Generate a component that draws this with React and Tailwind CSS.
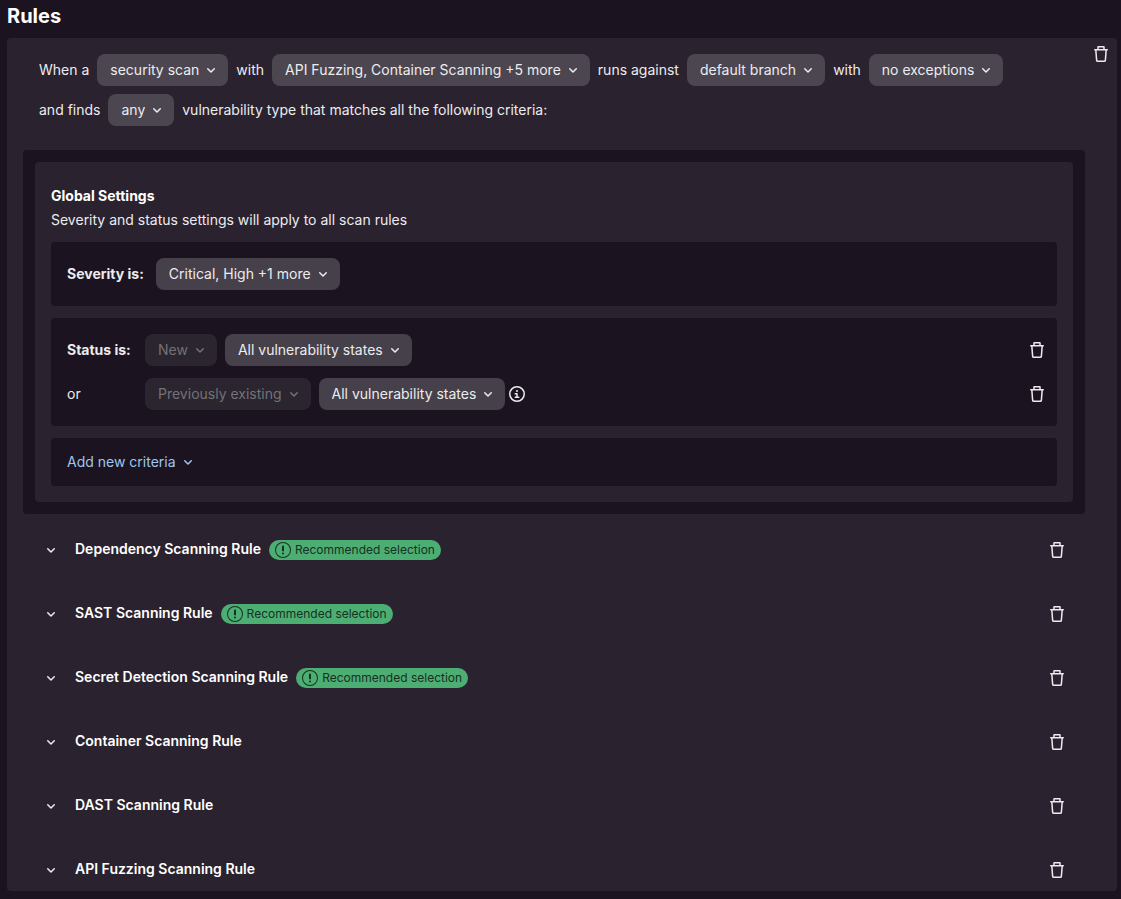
import { useState } from "react";

const scanRules = [
  { name: "Dependency Scanning Rule", recommended: true },
  { name: "SAST Scanning Rule", recommended: true },
  { name: "Secret Detection Scanning Rule", recommended: true },
  { name: "Container Scanning Rule" },
  { name: "DAST Scanning Rule" },
  { name: "API Fuzzing Scanning Rule" },
];

function ChevronDown({ className = "" }) {
  return (
    <svg viewBox="0 0 16 16" fill="currentColor" aria-hidden="true" className={`size-4 shrink-0 ${className}`}>
      <path
        fillRule="evenodd"
        d="M4.22 6.22a.75.75 0 0 1 1.06 0L8 8.94l2.72-2.72a.75.75 0 1 1 1.06 1.06l-3.25 3.25a.75.75 0 0 1-1.06 0L4.22 7.28a.75.75 0 0 1 0-1.06z"
      />
    </svg>
  );
}

function InfoIcon() {
  return (
    <svg viewBox="0 0 16 16" fill="currentColor" aria-hidden="true" className="size-4">
      <path
        fillRule="evenodd"
        d="M8 14.5a6.5 6.5 0 1 0 0-13 6.5 6.5 0 0 0 0 13zM8 16A8 8 0 1 0 8 0a8 8 0 0 0 0 16zM7 5a1 1 0 1 1 2 0 1 1 0 0 1-2 0zm-.75 2a.75.75 0 0 0 0 1.5h1v2h-1a.75.75 0 0 0 0 1.5h3.5a.75.75 0 0 0 0-1.5h-1V7.75A.75.75 0 0 0 8 7H6.25z"
      />
    </svg>
  );
}

function WarningIcon() {
  return (
    <svg viewBox="0 0 16 16" fill="currentColor" aria-hidden="true" className="size-4 shrink-0">
      <path
        fillRule="evenodd"
        d="M8 15a7 7 0 1 0 0-14 7 7 0 0 0 0 14zm0 1A8 8 0 1 0 8 0a8 8 0 0 0 0 16zM7 4.5a1 1 0 0 1 2 0v4a1 1 0 0 1-2 0v-4zM9 11.5a1 1 0 1 1-2 0 1 1 0 0 1 2 0z"
      />
    </svg>
  );
}

function RemoveButton({ label }) {
  return (
    <button
      type="button"
      aria-label={label}
      className="flex size-8 shrink-0 items-center justify-center rounded-lg text-[#ececef] hover:bg-white/10"
    >
      <svg viewBox="0 0 16 16" fill="currentColor" aria-hidden="true" className="size-4">
        <path
          fillRule="evenodd"
          d="M5.75 3V1.5h4.5V3h-4.5zm-1.5 0V1a1 1 0 0 1 1-1h5.5a1 1 0 0 1 1 1v2h2.5a.75.75 0 0 1 0 1.5h-.365l-.743 9.653A2 2 0 0 1 11.148 16H4.852a2 2 0 0 1-1.994-1.847L2.115 4.5H1.75a.75.75 0 0 1 0-1.5h2.5zm-.63 1.5.734 9.538a.5.5 0 0 0 .498.462h6.296a.5.5 0 0 0 .498-.462L12.38 4.5H3.62z"
        />
      </svg>
    </button>
  );
}

function Dropdown({ label, value, disabled = false, dark = false }) {
  let colors = "bg-[#4c4650] text-[#ececef]";
  if (dark) colors = "bg-[#454049] text-[#ececef]";
  if (disabled) colors = "bg-[#2a252e] text-[#737278]";

  return (
    <span className="relative inline-flex">
      <select
        aria-label={label}
        defaultValue={value}
        disabled={disabled}
        className={`field-sizing-content h-8 appearance-none rounded-lg pr-[29px] pl-[13px] opacity-100 ${colors}`}
      >
        <option>{value}</option>
      </select>
      <ChevronDown
        className={`pointer-events-none absolute top-2 right-[9px] ${disabled ? "text-[#737278]" : "text-[#ececef]"}`}
      />
    </span>
  );
}

function GlobalSettings() {
  return (
    <section className="rounded bg-[#1b131f] p-3">
      <div className="rounded bg-[#2a222e] px-4 pt-6 pb-4">
        <h3 className="font-bold text-white">Global Settings</h3>
        <p className="mt-1">Severity and status settings will apply to all scan rules</p>

        <div className="mt-3 flex flex-col gap-3">
          <div className="flex items-center gap-3 rounded bg-[#1b131f] p-4">
            <span className="font-bold">Severity is:</span>
            <Dropdown dark label="Severity" value="Critical, High +1 more" />
          </div>

          <div className="flex flex-col gap-3 rounded bg-[#1b131f] py-4 pr-1 pl-4">
            <div className="flex items-center gap-2">
              <span className="w-[70px] font-bold">Status is:</span>
              <Dropdown disabled label="Status group" value="New" />
              <Dropdown dark label="New vulnerability states" value="All vulnerability states" />
              <div className="ml-auto">
                <RemoveButton label="Remove new status" />
              </div>
            </div>
            <div className="flex items-center gap-2">
              <span className="w-[70px]">or</span>
              <Dropdown disabled label="Status group" value="Previously existing" />
              <div className="flex items-center gap-1">
                <Dropdown dark label="Existing vulnerability states" value="All vulnerability states" />
                <button type="button" aria-label="More information">
                  <InfoIcon />
                </button>
              </div>
              <div className="ml-auto">
                <RemoveButton label="Remove previously existing status" />
              </div>
            </div>
          </div>

          <div className="flex h-12 items-center rounded bg-[#1b131f] px-4">
            <button type="button" aria-haspopup="menu" className="flex items-center gap-1 text-[#9dc7f1]">
              Add new criteria
              <ChevronDown />
            </button>
          </div>
        </div>
      </div>
    </section>
  );
}

function ScanRule({ rule }) {
  const [open, setOpen] = useState(false);

  return (
    <li className="flex items-center pr-3 pl-4">
      <button
        type="button"
        aria-label={`Toggle ${rule.name}`}
        aria-expanded={open}
        onClick={() => setOpen(!open)}
        className="mr-3 flex size-6 items-center justify-center rounded text-[#ececef]"
      >
        <ChevronDown className={open ? "rotate-180" : ""} />
      </button>
      <h3 className="pb-[2px] font-semibold text-white">{rule.name}</h3>
      {rule.recommended && (
        <span className="ml-2 flex h-5 items-center gap-1 rounded-full bg-[#4cae73] px-[6px] text-xs text-[#18301f]">
          <WarningIcon />
          Recommended selection
        </span>
      )}
      <div className="ml-auto">
        <RemoveButton label={`Remove ${rule.name}`} />
      </div>
    </li>
  );
}

export default function App() {
  return (
    <main className="min-h-screen bg-[#1b131f] pt-1 pr-1 pb-2 pl-[7px] font-['Inter','Liberation_Sans',sans-serif] text-sm text-[#ececef]">
      <h2 className="text-xl leading-6 font-bold text-white">Rules</h2>

      <div className="mt-[10px] flex items-start rounded bg-[#2a222e]">
        <div className="min-w-0 flex-1 pt-4 pb-[5px] pl-4">
          <div className="mb-6 flex flex-wrap items-center gap-2 px-4">
            <span>When a</span>
            <Dropdown label="Scan type" value="security scan" />
            <span>with</span>
            <Dropdown label="Scanners" value="API Fuzzing, Container Scanning +5 more" />
            <span>runs against</span>
            <Dropdown label="Branches" value="default branch" />
            <span>with</span>
            <Dropdown label="Branch exceptions" value="no exceptions" />
            <span>and finds</span>
            <Dropdown label="Vulnerabilities allowed" value="any" />
            <span>vulnerability type that matches all the following criteria:</span>
          </div>

          <GlobalSettings />

          <ul className="mt-5 flex flex-col gap-8">
            {scanRules.map((rule) => (
              <ScanRule key={rule.name} rule={rule} />
            ))}
          </ul>
        </div>
        <RemoveButton label="Remove rule" />
      </div>
    </main>
  );
}
